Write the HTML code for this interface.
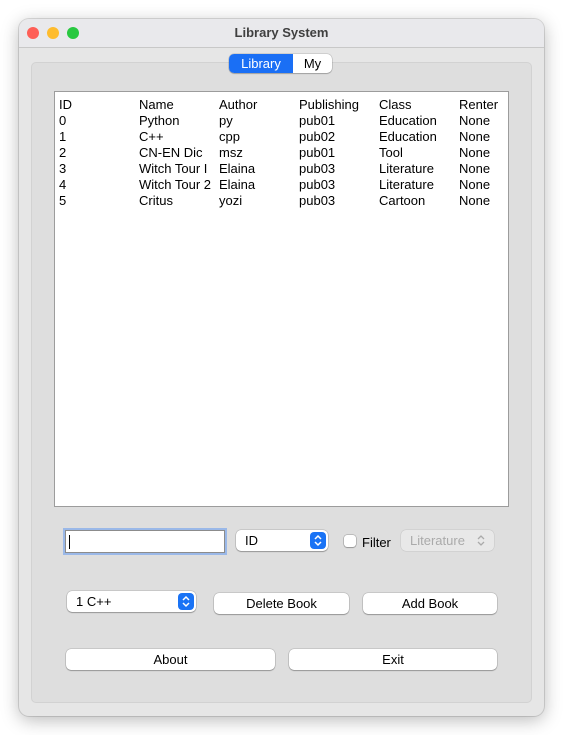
<!DOCTYPE html><html><head><style>
body{margin:0;width:563px;height:735px;background:#fff;font-family:"Liberation Sans",sans-serif;font-size:13px;color:#000;position:relative;overflow:hidden}
.win{position:absolute;left:19px;top:19px;width:525px;height:697px;background:#e6e6e6;border-radius:10px;box-shadow:0 4px 18px rgba(0,0,0,.28),0 0 0 1px rgba(0,0,0,.12);overflow:hidden}
.tb{position:absolute;left:0;top:0;width:100%;height:28px;background:#e9e9ec;border-bottom:1px solid #c8c8c8;text-align:center;line-height:28px;font-weight:bold;color:#404040;font-size:13px}
.dot{position:absolute;top:8px;width:12px;height:12px;border-radius:50%}
.a{position:absolute}
.grp{left:12px;top:43px;width:499px;height:639px;background:#dedede;border:1px solid #d2d2d2;border-radius:5px}
.tbl{left:35px;top:72px;width:453px;height:414px;background:#fff;border:1px solid #9c9c9c}
.btn{position:absolute;background:#fff;border-radius:5px;box-shadow:0 0 0 .5px rgba(0,0,0,.2),0 1px 1px rgba(0,0,0,.25);text-align:center;line-height:21px;height:21px}
.arr{position:absolute;right:2px;top:2px;width:16px;height:17px;background:#1a73f5;border-radius:4px}
.arr svg,.dis svg{position:absolute;left:0;top:0}
</style></head><body>
<div class="win">
<div class="tb">Library System</div>
<div class="dot" style="left:8px;background:#fe5f57"></div>
<div class="dot" style="left:28px;background:#febc2e"></div>
<div class="dot" style="left:48px;background:#28c840"></div>
<div class="a grp"></div>
<div class="a" style="left:210px;top:35px;width:103px;height:19px;border-radius:5px;background:#fff;box-shadow:0 0 0 .5px rgba(0,0,0,.2),0 1px 1px rgba(0,0,0,.2);overflow:hidden">
<div class="a" style="left:0;top:0;width:64px;height:19px;background:#1a6ff5;color:#fff;text-align:center;line-height:19px">Library</div>
<div class="a" style="left:64px;top:0;width:39px;height:19px;text-align:center;line-height:19px">My</div></div>
<div class="a tbl"><div style="position:absolute;left:4px;top:5px;line-height:16px">
<div style="display:grid;grid-template-columns:80px 80px 80px 80px 80px 50px;white-space:nowrap;overflow:hidden">
<span>ID</span><span>Name</span><span>Author</span><span>Publishing</span><span>Class</span><span>Renter</span>
<span>0</span><span>Python</span><span>py</span><span>pub01</span><span>Education</span><span>None</span>
<span>1</span><span>C++</span><span>cpp</span><span>pub02</span><span>Education</span><span>None</span>
<span>2</span><span>CN-EN Dic</span><span>msz</span><span>pub01</span><span>Tool</span><span>None</span>
<span>3</span><span style="overflow:hidden">Witch Tour I</span><span>Elaina</span><span>pub03</span><span>Literature</span><span>None</span>
<span>4</span><span style="overflow:hidden">Witch Tour 2</span><span>Elaina</span><span>pub03</span><span>Literature</span><span>None</span>
<span>5</span><span>Critus</span><span>yozi</span><span>pub03</span><span>Cartoon</span><span>None</span>
</div></div></div>
<div class="a" style="left:46px;top:511px;width:158px;height:21px;background:#fff;border:1px solid #8c8c8c;box-shadow:0 0 0 2px #9ab8e8"><div style="position:absolute;left:3px;top:4px;width:1px;height:14px;background:#000"></div></div>
<div class="btn" style="left:217px;top:511px;width:92px;text-align:left;text-indent:9px">ID<div class="arr"><svg width="16" height="17"><path d="M5 7l3-3 3 3M5 10l3 3 3-3" fill="none" stroke="#fff" stroke-width="1.5"/></svg></div></div>
<div class="a" style="left:325px;top:516px;width:12px;height:12px;background:#fff;border-radius:3px;box-shadow:0 0 0 .5px rgba(0,0,0,.3),0 1px 1px rgba(0,0,0,.2)"></div>
<div class="a" style="left:343px;top:516px">Filter</div>
<div class="btn dis" style="left:382px;top:511px;width:93px;background:#e8e8e8;color:#aaa;text-align:left;text-indent:9px;box-shadow:0 0 0 .5px rgba(0,0,0,.1)">Literature<svg width="93" height="21"><path d="M77 9l3-3 3 3M77 12l3 3 3-3" fill="none" stroke="#aaa" stroke-width="1.3"/></svg></div>
<div class="btn" style="left:48px;top:572px;width:129px;text-align:left;text-indent:9px">1 C++<div class="arr"><svg width="16" height="17"><path d="M5 7l3-3 3 3M5 10l3 3 3-3" fill="none" stroke="#fff" stroke-width="1.5"/></svg></div></div>
<div class="btn" style="left:195px;top:574px;width:135px">Delete Book</div>
<div class="btn" style="left:344px;top:574px;width:134px">Add Book</div>
<div class="btn" style="left:47px;top:630px;width:209px">About</div>
<div class="btn" style="left:270px;top:630px;width:208px">Exit</div>
</div>
</body></html>
